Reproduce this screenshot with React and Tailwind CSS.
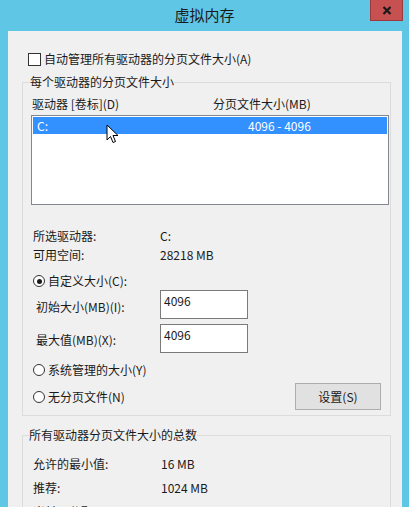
import React from "react";

const font = { fontFamily: '"Noto Sans CJK SC", "Noto Sans", sans-serif' };

function Radio({ checked }) {
  return (
    <span className="w-[12px] h-[12px] rounded-full border border-[#333333] bg-white flex items-center justify-center shrink-0">
      {checked && <span className="w-[5px] h-[5px] rounded-full bg-[#1a1a1a]" />}
    </span>
  );
}

function Cursor() {
  return (
    <svg className="absolute left-[74px] top-[8px]" width="13" height="21" viewBox="0 0 13 21">
      <path d="M1 1 L1 16 L4.5 12.5 L7 18.5 L9.5 17.5 L7 11.5 L12 11.5 Z" fill="#ffffff" stroke="#000000" strokeWidth="1" strokeLinejoin="miter" />
    </svg>
  );
}

export default function App() {
  return (
    <div className="w-[409px] h-[507px] overflow-hidden bg-[#5fc6e6] flex flex-col text-[12px] text-[#1a1a1a] leading-[16px]" style={font}>
      <div className="h-[31px] shrink-0 relative flex items-center justify-center">
        <span className="text-[15px] text-[#1a1a1a] pb-[1px]">虚拟内存</span>
        <div className="absolute top-0 right-[6px] w-[33px] h-[21px] bg-[#c75050] border border-[#9a3a3a] border-t-0 flex items-center justify-center">
          <svg width="10" height="9" viewBox="0 0 10 9">
            <path d="M1.5 1 L8.5 8 M8.5 1 L1.5 8" stroke="#1a1a1a" strokeWidth="2.2" />
          </svg>
        </div>
      </div>

      <div className="ml-[8px] mr-[7px] flex-1 bg-[#f0f0f0] flex flex-col">
        <div className="mt-[20px] ml-[20px] flex items-center h-[16px]">
          <span className="w-[13px] h-[13px] border border-[#333333] bg-white shrink-0" />
          <span className="ml-[3px]">自动管理所有驱动器的分页文件大小(A)</span>
        </div>

        <fieldset className="mt-[7px] ml-[14px] w-[369px] border border-[#dcdcdc] pl-[8px] pb-[5px]">
          <legend className="h-[16px] px-0 -ml-[1px]">每个驱动器的分页文件大小</legend>
          <div className="mt-[6px] h-[16px] flex">
            <span className="ml-[1px] w-[181px]">驱动器 [卷标](D)</span>
            <span>分页文件大小(MB)</span>
          </div>
          <div className="mt-[3px] w-[358px] h-[90px] border border-[#828790] bg-white relative pt-[1px] px-[1px]">
            <div className="h-[17px] bg-[#3390ff] text-white flex items-center">
              <span className="ml-[4px] w-[211px]">C:</span>
              <span>4096 - 4096</span>
            </div>
            <Cursor />
          </div>

          <div className="mt-[23px] h-[16px] flex pl-[2px]">
            <span className="w-[127px]">所选驱动器:</span>
            <span>C:</span>
          </div>
          <div className="mt-[3px] h-[16px] flex pl-[2px]">
            <span className="w-[127px]">可用空间:</span>
            <span>28218 MB</span>
          </div>

          <div className="mt-[10px] h-[16px] flex items-center pl-[2px]">
            <Radio checked />
            <span className="ml-[3px]">自定义大小(C):</span>
          </div>
          <div className="mt-[1px] h-[29px] flex items-center">
            <span className="w-[129px] pl-[5px] pt-[5px]">初始大小(MB)(I):</span>
            <div className="w-[88px] h-[29px] border border-[#7a7a7a] bg-white pl-[3px] pt-[2px]">4096</div>
          </div>
          <div className="mt-[5px] h-[29px] flex items-center">
            <span className="w-[129px] pl-[5px] pt-[3px]">最大值(MB)(X):</span>
            <div className="w-[88px] h-[29px] border border-[#7a7a7a] bg-white pl-[3px] pt-[2px]">4096</div>
          </div>

          <div className="mt-[9px] h-[16px] flex items-center pl-[2px]">
            <Radio />
            <span className="ml-[3px]">系统管理的大小(Y)</span>
          </div>
          <div className="mt-[5px] h-[27px] flex items-center pl-[2px]">
            <Radio />
            <span className="ml-[3px]">无分页文件(N)</span>
            <div className="ml-auto mr-[9px] w-[86px] h-[27px] border border-[#adadad] bg-[#e1e1e1] flex items-center justify-center">
              设置(S)
            </div>
          </div>
        </fieldset>

        <fieldset className="mt-[11px] ml-[14px] w-[369px] border border-[#dcdcdc] pl-[6px] pb-[5px]">
          <legend className="h-[16px] px-0">所有驱动器分页文件大小的总数</legend>
          <div className="mt-[13px] h-[16px] flex pl-[4px]">
            <span className="w-[128px]">允许的最小值:</span>
            <span>16 MB</span>
          </div>
          <div className="mt-[8px] h-[16px] flex pl-[4px]">
            <span className="w-[128px]">推荐:</span>
            <span>1024 MB</span>
          </div>
          <div className="mt-[8px] h-[16px] flex pl-[4px]">
            <span className="w-[128px]">当前已分配:</span>
            <span>4096 MB</span>
          </div>
        </fieldset>
      </div>
    </div>
  );
}
